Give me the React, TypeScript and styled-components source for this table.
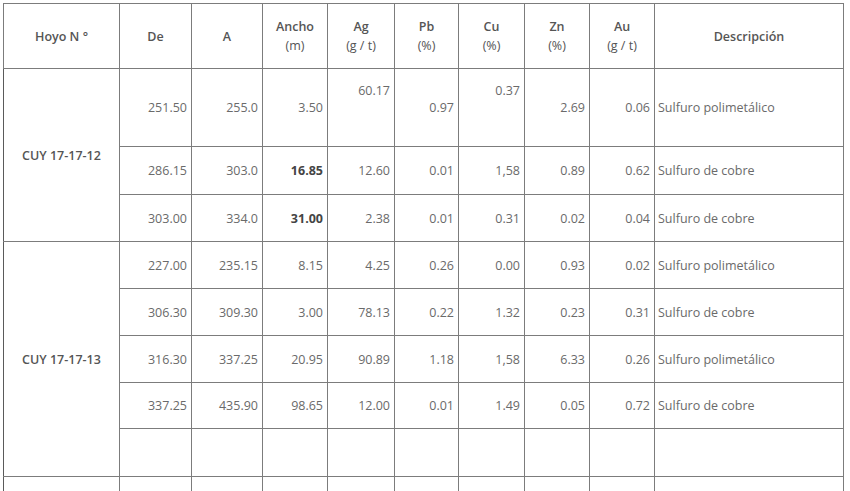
import React from "react";
import styled, { createGlobalStyle } from "styled-components";

const Global = createGlobalStyle`
  html, body {
    margin: 0;
    padding: 0;
    background: #ffffff;
    overflow: hidden;
  }
  body {
    font-family: "Open Sans", "Noto Sans", sans-serif;
  }
`;

const Page = styled.div`
  padding: 3px 0 0 3px;
  width: 850px;
  height: 491px;
  box-sizing: border-box;
  overflow: hidden;
`;

const Table = styled.table`
  border-collapse: collapse;
  table-layout: fixed;
  width: 840px;
  font-size: 12.5px;
  line-height: 19px;
`;

const HeadCell = styled.th`
  border: 1px solid #7c7c7c;
  height: 64px;
  padding: 0 3px;
  font-weight: 600;
  color: #555555;
  text-align: center;
  vertical-align: middle;
`;

const GroupCell = styled.td`
  border: 1px solid #7c7c7c;
  border-left-color: #5a5a5a;
  padding: 0 3px;
  font-weight: 600;
  color: #555555;
  text-align: center;
  vertical-align: middle;
`;

const Row = styled.tr<{ $h: number }>`
  height: ${(p) => p.$h}px;
`;

const NumCell = styled.td<{ $bold?: boolean; $top?: boolean }>`
  border: 1px solid #7c7c7c;
  padding: ${(p) => (p.$top ? "12px 4px 0 3px" : "0 4px 0 3px")};
  text-align: right;
  vertical-align: ${(p) => (p.$top ? "top" : "middle")};
  color: ${(p) => (p.$bold ? "#444444" : "#6a6a6a")};
  font-weight: ${(p) => (p.$bold ? 700 : 400)};
  white-space: nowrap;
`;

const DescCell = styled.td`
  border: 1px solid #7c7c7c;
  padding: 0 3px;
  text-align: left;
  vertical-align: middle;
  color: #6a6a6a;
  white-space: nowrap;
`;

type DataRow = {
  h: number;
  vals: string[];
  bold?: number[];
  top?: number[];
  desc: string;
};

type Group = { name: string; rows: DataRow[] };

const groups: Group[] = [
  {
    name: "CUY 17-17-12",
    rows: [
      {
        h: 78,
        vals: ["251.50", "255.0", "3.50", "60.17", "0.97", "0.37", "2.69", "0.06"],
        top: [3, 5],
        desc: "Sulfuro polimetálico",
      },
      {
        h: 48,
        vals: ["286.15", "303.0", "16.85", "12.60", "0.01", "1,58", "0.89", "0.62"],
        bold: [2],
        desc: "Sulfuro de cobre",
      },
      {
        h: 47,
        vals: ["303.00", "334.0", "31.00", "2.38", "0.01", "0.31", "0.02", "0.04"],
        bold: [2],
        desc: "Sulfuro de cobre",
      },
    ],
  },
  {
    name: "CUY 17-17-13",
    rows: [
      {
        h: 47,
        vals: ["227.00", "235.15", "8.15", "4.25", "0.26", "0.00", "0.93", "0.02"],
        desc: "Sulfuro polimetálico",
      },
      {
        h: 47,
        vals: ["306.30", "309.30", "3.00", "78.13", "0.22", "1.32", "0.23", "0.31"],
        desc: "Sulfuro de cobre",
      },
      {
        h: 47,
        vals: ["316.30", "337.25", "20.95", "90.89", "1.18", "1,58", "6.33", "0.26"],
        desc: "Sulfuro polimetálico",
      },
      {
        h: 46,
        vals: ["337.25", "435.90", "98.65", "12.00", "0.01", "1.49", "0.05", "0.72"],
        desc: "Sulfuro de cobre",
      },
      {
        h: 48,
        vals: ["", "", "", "", "", "", "", ""],
        desc: "",
      },
    ],
  },
  {
    name: "",
    rows: [
      {
        h: 47,
        vals: ["", "", "", "", "", "", "", ""],
        desc: "",
      },
    ],
  },
];

const colWidths = [116, 72, 71, 65, 67, 64, 66, 65, 65, 189];

const headers: [string, string?][] = [
  ["Hoyo N °"],
  ["De"],
  ["A"],
  ["Ancho", "(m)"],
  ["Ag", "(g / t)"],
  ["Pb", "(%)"],
  ["Cu", "(%)"],
  ["Zn", "(%)"],
  ["Au", "(g / t)"],
  ["Descripción"],
];

export default function App() {
  return (
    <Page>
      <Global />
      <Table>
        <colgroup>
          {colWidths.map((w, i) => (
            <col key={i} style={{ width: w }} />
          ))}
        </colgroup>
        <thead>
          <tr>
            {headers.map(([a, b], i) => (
              <HeadCell key={i}>
                {a}
                {b && (
                  <>
                    <br />
                    <span style={{ fontWeight: 400 }}>{b}</span>
                  </>
                )}
              </HeadCell>
            ))}
          </tr>
        </thead>
        <tbody>
          {groups.map((g) =>
            g.rows.map((r, ri) => (
              <Row $h={r.h} key={g.name + ri}>
                {ri === 0 && <GroupCell rowSpan={g.rows.length}>{g.name}</GroupCell>}
                {r.vals.map((v, vi) => (
                  <NumCell
                    key={vi}
                    $bold={r.bold?.includes(vi)}
                    $top={r.top?.includes(vi)}
                  >
                    {v}
                  </NumCell>
                ))}
                <DescCell>{r.desc}</DescCell>
              </Row>
            ))
          )}
        </tbody>
      </Table>
    </Page>
  );
}
